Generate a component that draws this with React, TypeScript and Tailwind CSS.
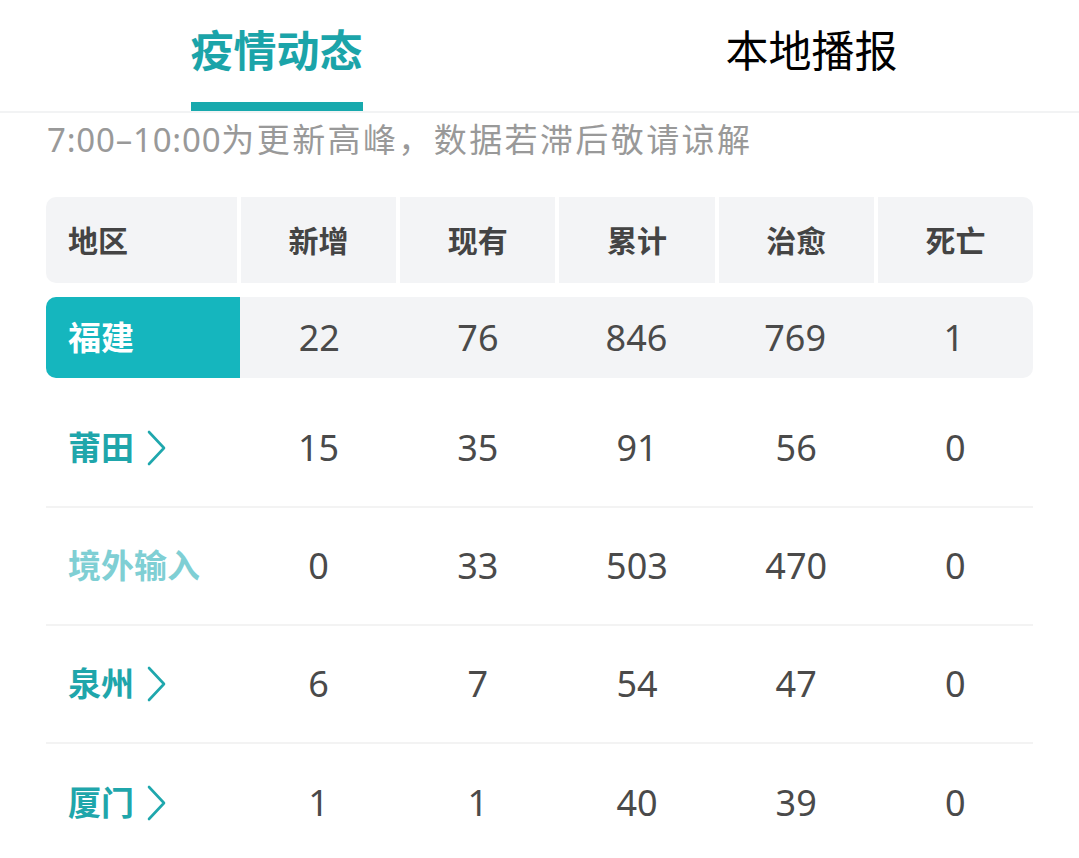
import React, { useState } from 'react';

type Row = {
  name: string;
  values: number[];
  link: boolean;
  muted?: boolean;
};

const headers = ['新增', '现有', '累计', '治愈', '死亡'];

const province = { name: '福建', values: [22, 76, 846, 769, 1] };

const rows: Row[] = [
  { name: '莆田', values: [15, 35, 91, 56, 0], link: true },
  { name: '境外输入', values: [0, 33, 503, 470, 0], link: false, muted: true },
  { name: '泉州', values: [6, 7, 54, 47, 0], link: true },
  { name: '厦门', values: [1, 1, 40, 39, 0], link: true },
];

const Chevron: React.FC = () => (
  <svg width="20" height="36" viewBox="0 0 20 36" fill="none" className="ml-[12px]">
    <polyline
      points="3,2 18,18 3,34"
      stroke="#1fa7ad"
      strokeWidth="2.6"
      strokeLinecap="round"
      strokeLinejoin="round"
    />
  </svg>
);

const App: React.FC = () => {
  const [tab, setTab] = useState<'trend' | 'local'>('trend');

  return (
    <div className="w-[1079px] h-[858px] overflow-hidden bg-white font-['Noto_Sans','Noto_Sans_CJK_SC',sans-serif]">
      {/* Tabs */}
      <div className="flex h-[113px] pl-[9px] border-b-2 border-[#f2f3f4]">
        <button
          className="flex-1 h-full flex flex-col items-center"
          onClick={() => setTab('trend')}
        >
          <span
            className={`mt-[24px] text-[43px] leading-[54px] ${
              tab === 'trend' ? 'font-bold text-[#1ba4a9]' : 'text-black'
            }`}
          >
            疫情动态
          </span>
          {tab === 'trend' && <span className="mt-auto h-[9px] w-[172px] bg-[#17a9ad]" />}
        </button>
        <button
          className="flex-1 h-full flex flex-col items-center"
          onClick={() => setTab('local')}
        >
          <span
            className={`mt-[24px] text-[43px] leading-[54px] ${
              tab === 'local' ? 'font-bold text-[#1ba4a9]' : 'text-black'
            }`}
          >
            本地播报
          </span>
          {tab === 'local' && <span className="mt-auto h-[9px] w-[172px] bg-[#17a9ad]" />}
        </button>
      </div>

      {/* Notice */}
      <p className="mt-[7px] px-[47px] text-[33px] leading-[40px] text-[#999999] whitespace-nowrap">
        <span className="tracking-[0.8px]">7:00–10:00</span>
        <span className="tracking-[2.4px]">为更新高峰，数据若滞后敬请谅解</span>
      </p>

      {/* Table */}
      <div className="mx-[46px] mt-[37px]">
        <div className="grid grid-cols-[191px_repeat(5,1fr)] gap-1 h-[86px]">
          <div className="bg-[#f3f4f6] rounded-l-[10px] flex items-center pl-[22px] text-[30px] font-bold text-[#444444]">
            地区
          </div>
          {headers.map((h, i) => (
            <div
              key={h}
              className={`bg-[#f3f4f6] flex items-center justify-center text-[30px] font-bold text-[#444444] ${
                i === headers.length - 1 ? 'rounded-r-[10px]' : ''
              }`}
            >
              {h}
            </div>
          ))}
        </div>

        <div className="mt-[14px] grid grid-cols-[194px_repeat(5,1fr)] h-[81px] bg-[#f3f4f6] rounded-[10px]">
          <div className="bg-[#15b6be] rounded-l-[10px] flex items-center pl-[22px] text-[33px] font-bold text-white">
            {province.name}
          </div>
          {province.values.map((v, i) => (
            <div key={i} className="flex items-center justify-center text-[36px] text-[#4a4a4a]">
              {v}
            </div>
          ))}
        </div>

        <div className="mt-[12px]">
          {rows.map((r, idx) => (
            <div
              key={r.name}
              className={`grid grid-cols-[191px_repeat(5,1fr)] gap-1 h-[118px] ${
                idx < rows.length - 1 ? 'border-b-2 border-[#f3f3f3]' : ''
              }`}
            >
              <div className="flex items-center pl-[22px]">
                <span
                  className={`text-[33px] font-bold ${
                    r.muted ? 'text-[#7fcfd4]' : 'text-[#1fa6ab]'
                  }`}
                >
                  {r.name}
                </span>
                {r.link && <Chevron />}
              </div>
              {r.values.map((v, i) => (
                <div key={i} className="flex items-center justify-center text-[36px] text-[#4a4a4a]">
                  {v}
                </div>
              ))}
            </div>
          ))}
        </div>
      </div>
    </div>
  );
};

export default App;
